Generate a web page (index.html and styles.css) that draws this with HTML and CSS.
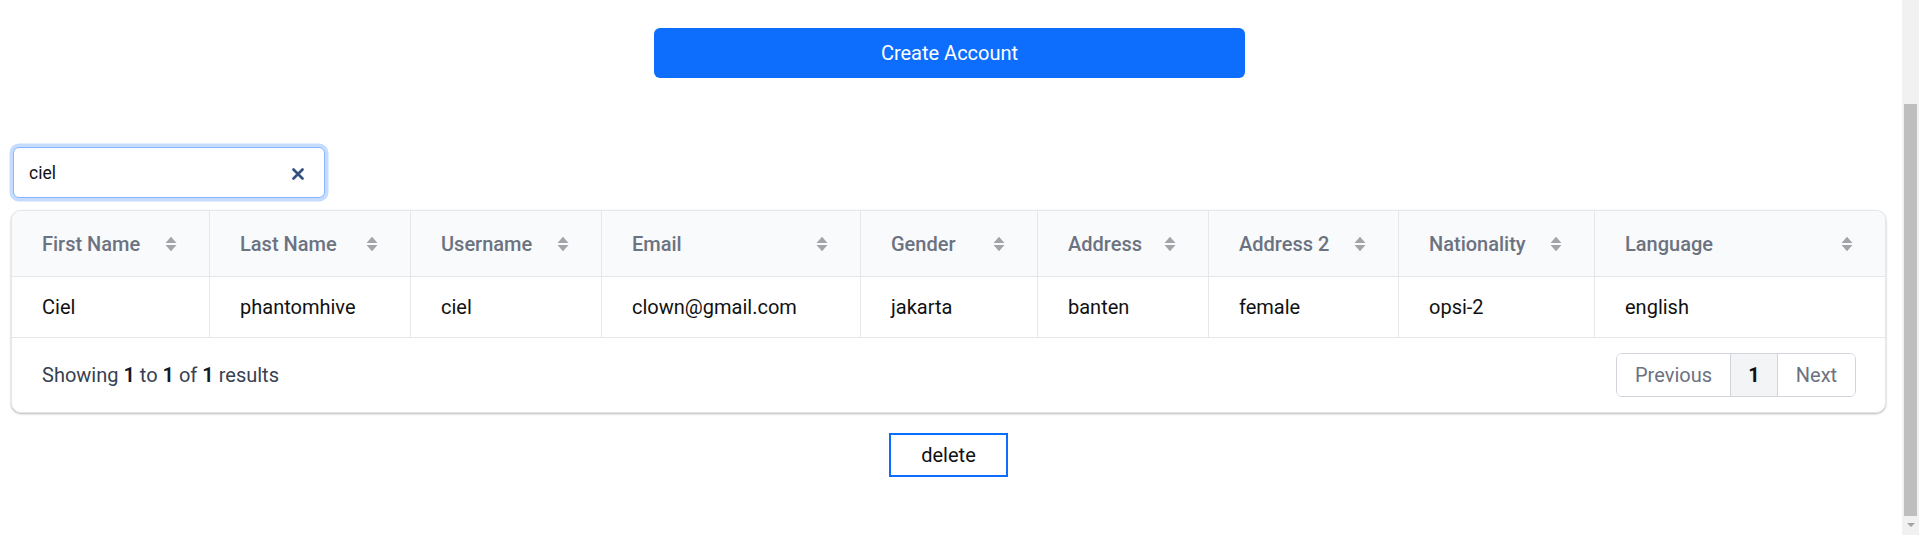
FILE: index.html
```html
<!DOCTYPE html>
<html lang="en">
<head>
<meta charset="utf-8">
<title>Accounts</title>
<link rel="stylesheet" href="styles.css">
</head>
<body>
<main class="page">
  <div class="actions">
    <button class="btn-create" type="button">Create Account</button>
  </div>

  <div class="search">
    <input class="search-input" type="text" value="ciel" aria-label="Search">
    <span class="search-clear" aria-label="Clear">
      <svg width="12" height="12" viewBox="0 0 12 12"><path d="M1.5 1.5 L10.5 10.5 M10.5 1.5 L1.5 10.5" stroke="currentColor" stroke-width="2.6" stroke-linecap="round"/></svg>
    </span>
  </div>

  <div class="card">
    <table class="grid">
      <colgroup>
        <col class="w-first"><col class="w-last"><col class="w-user"><col class="w-email"><col class="w-gender"><col class="w-addr"><col class="w-addr2"><col class="w-nat"><col class="w-lang">
      </colgroup>
      <thead>
        <tr>
          <th><div class="th">First Name<svg class="sort" width="12" height="16" viewBox="0 0 12 16"><path d="M0.5 7 L6 0.8 L11.5 7 Z M0.5 9 L11.5 9 L6 15.2 Z" fill="currentColor"/></svg></div></th>
          <th><div class="th">Last Name<svg class="sort" width="12" height="16" viewBox="0 0 12 16"><path d="M0.5 7 L6 0.8 L11.5 7 Z M0.5 9 L11.5 9 L6 15.2 Z" fill="currentColor"/></svg></div></th>
          <th><div class="th">Username<svg class="sort" width="12" height="16" viewBox="0 0 12 16"><path d="M0.5 7 L6 0.8 L11.5 7 Z M0.5 9 L11.5 9 L6 15.2 Z" fill="currentColor"/></svg></div></th>
          <th><div class="th">Email<svg class="sort" width="12" height="16" viewBox="0 0 12 16"><path d="M0.5 7 L6 0.8 L11.5 7 Z M0.5 9 L11.5 9 L6 15.2 Z" fill="currentColor"/></svg></div></th>
          <th><div class="th">Gender<svg class="sort" width="12" height="16" viewBox="0 0 12 16"><path d="M0.5 7 L6 0.8 L11.5 7 Z M0.5 9 L11.5 9 L6 15.2 Z" fill="currentColor"/></svg></div></th>
          <th><div class="th">Address<svg class="sort" width="12" height="16" viewBox="0 0 12 16"><path d="M0.5 7 L6 0.8 L11.5 7 Z M0.5 9 L11.5 9 L6 15.2 Z" fill="currentColor"/></svg></div></th>
          <th><div class="th">Address 2<svg class="sort" width="12" height="16" viewBox="0 0 12 16"><path d="M0.5 7 L6 0.8 L11.5 7 Z M0.5 9 L11.5 9 L6 15.2 Z" fill="currentColor"/></svg></div></th>
          <th><div class="th">Nationality<svg class="sort" width="12" height="16" viewBox="0 0 12 16"><path d="M0.5 7 L6 0.8 L11.5 7 Z M0.5 9 L11.5 9 L6 15.2 Z" fill="currentColor"/></svg></div></th>
          <th><div class="th">Language<svg class="sort" width="12" height="16" viewBox="0 0 12 16"><path d="M0.5 7 L6 0.8 L11.5 7 Z M0.5 9 L11.5 9 L6 15.2 Z" fill="currentColor"/></svg></div></th>
        </tr>
      </thead>
      <tbody>
        <tr>
          <td>Ciel</td>
          <td>phantomhive</td>
          <td>ciel</td>
          <td>clown@gmail.com</td>
          <td>jakarta</td>
          <td>banten</td>
          <td>female</td>
          <td>opsi-2</td>
          <td>english</td>
        </tr>
      </tbody>
    </table>
    <div class="card-footer">
      <p class="summary">Showing <b>1</b> to <b>1</b> of <b>1</b> results</p>
      <nav class="pager">
        <button type="button" class="pg pg-prev">Previous</button>
        <button type="button" class="pg pg-current">1</button>
        <button type="button" class="pg pg-next">Next</button>
      </nav>
    </div>
  </div>

  <div class="bottom">
    <button class="btn-delete" type="button">delete</button>
  </div>
</main>
<aside class="scrollbar" aria-hidden="true">
  <div class="scroll-thumb"></div>
  <div class="scroll-arrow"></div>
</aside>
</body>
</html>
```

FILE: styles.css
```css
html, body {
  margin: 0;
  padding: 0;
  background: #ffffff;
}

body {
  display: flex;
  height: 535px;
  overflow: hidden;
  font-family: Roboto, "Liberation Sans", Arial, sans-serif;
  color: #111827;
}

.page {
  flex: 1;
  min-width: 0;
  padding: 28px 16px 0 11px;
}

.scrollbar {
  flex: none;
  width: 17px;
  height: 535px;
  background: #f1f1f1;
  display: flex;
  flex-direction: column;
  align-items: center;
  padding-top: 104px;
  box-sizing: border-box;
}

.scroll-thumb {
  width: 13px;
  height: 412px;
  background: #bebebe;
}

.scroll-arrow {
  margin-top: 7px;
  width: 0;
  height: 0;
  border-left: 4px solid transparent;
  border-right: 4px solid transparent;
  border-top: 4px solid #a3a3a3;
}

.actions {
  display: flex;
  justify-content: center;
}

.btn-create {
  width: 591px;
  height: 50px;
  margin-left: 2px;
  border: none;
  border-radius: 6px;
  background: #0d6efd;
  color: #ffffff;
  font-family: Roboto, "Liberation Sans", Arial, sans-serif;
  font-size: 20px;
  font-weight: 400;
  cursor: pointer;
}

.search {
  position: relative;
  width: 312px;
  margin: 69px 0 0 2px;
}

.search-input {
  display: block;
  box-sizing: border-box;
  width: 312px;
  height: 51px;
  padding: 0 40px 0 15px;
  border: 1px solid #86b7fe;
  border-radius: 6px;
  box-shadow: 0 0 0 3.5px #c5dcfe;
  outline: none;
  font-family: Roboto, "Liberation Sans", Arial, sans-serif;
  font-size: 17.5px;
  color: #111111;
  background: #ffffff;
}

.search-clear {
  position: absolute;
  right: 21px;
  top: 21px;
  width: 12px;
  height: 12px;
  color: #34507f;
  display: flex;
}

.card {
  margin-top: 12px;
  border: 1px solid #e5e7eb;
  border-radius: 10px;
  overflow: hidden;
  background: #ffffff;
  box-shadow: 0 1px 2px rgba(0, 0, 0, 0.22), 0 1px 3px rgba(0, 0, 0, 0.08);
}

.grid {
  width: 100%;
  table-layout: fixed;
  border-collapse: separate;
  border-spacing: 0;
}

.w-first { width: 198px; }
.w-last { width: 201px; }
.w-user { width: 191px; }
.w-email { width: 259px; }
.w-gender { width: 177px; }
.w-addr { width: 171px; }
.w-addr2 { width: 190px; }
.w-nat { width: 196px; }
.w-lang { width: 290px; }

.grid th,
.grid td {
  border-bottom: 1px solid #e5e7eb;
  border-right: 1px solid #e5e7eb;
  text-align: left;
  font-size: 20px;
  line-height: 24px;
}

.grid th:last-child,
.grid td:last-child {
  border-right: none;
}

.grid th {
  padding: 0;
  background: #f9fafb;
  color: #6b7280;
  font-weight: 500;
}

.th {
  height: 65px;
  display: flex;
  align-items: center;
  justify-content: space-between;
  padding: 0 32px 0 30px;
}

.sort {
  color: #a3a3a8;
  flex: none;
}

.grid td {
  padding: 18px 30px;
  color: #111111;
  font-weight: 400;
  white-space: nowrap;
}

.card-footer {
  height: 74px;
  display: flex;
  align-items: center;
  justify-content: space-between;
  padding: 0 29px 0 30px;
}

.summary {
  margin: 0;
  font-size: 20px;
  color: #374151;
}

.summary b {
  font-weight: 600;
  color: #111827;
}

.pager {
  display: flex;
  border: 1px solid #d1d5db;
  border-radius: 6px;
  overflow: hidden;
}

.pg {
  height: 42px;
  padding: 0;
  border: none;
  border-left: 1px solid #d1d5db;
  background: #ffffff;
  color: #6b7280;
  font-family: Roboto, "Liberation Sans", Arial, sans-serif;
  font-size: 20px;
}

.pg-prev {
  width: 113px;
  border-left: none;
}

.pg-current {
  width: 47px;
  background: #f3f4f6;
  color: #111111;
  font-weight: 700;
}

.pg-next {
  width: 78px;
}

.bottom {
  display: flex;
  justify-content: center;
  margin-top: 20px;
}

.btn-delete {
  width: 119px;
  height: 44px;
  border: 2px solid #0d6efd;
  border-radius: 0;
  background: #ffffff;
  color: #111111;
  font-family: Roboto, "Liberation Sans", Arial, sans-serif;
  font-size: 20px;
}
```
